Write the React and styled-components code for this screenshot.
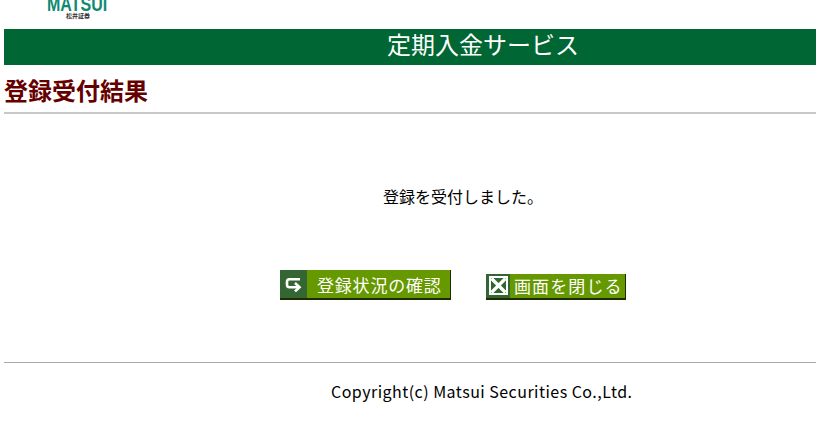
import React from "react";
import styled, { createGlobalStyle } from "styled-components";

const GlobalStyle = createGlobalStyle`
  html, body {
    margin: 0;
    padding: 0;
    background: #fff;
    overflow: hidden;
  }
  body {
    font-family: "Noto Sans CJK JP", "Liberation Sans", sans-serif;
  }
`;

const Page = styled.div`
  width: 816px;
  height: 421px;
  overflow: hidden;
  padding-left: 4px;
  box-sizing: border-box;
`;

const LogoRow = styled.div`
  height: 29px;
  padding-left: 43px;
  overflow: hidden;
`;

const Logo = styled.div`
  width: 62px;
  margin-top: -4px;
  text-align: center;
`;

const LogoName = styled.div`
  font-family: "Liberation Sans", sans-serif;
  font-weight: bold;
  font-size: 20px;
  line-height: 16px;
  color: #0f8a72;
  white-space: nowrap;
  transform: scaleX(0.8);
  transform-origin: left center;
  text-align: left;
`;

const LogoSub = styled.div`
  margin-top: 1px;
  font-size: 6px;
  line-height: 6px;
  font-weight: bold;
  color: #333;
`;

const Banner = styled.div`
  height: 36px;
  background: #006633;
  color: #fff;
  font-size: 24px;
  line-height: 30px;
  padding-left: 383px;
`;

const Heading = styled.h1`
  margin: 0;
  height: 47px;
  line-height: 49px;
  font-size: 24px;
  font-weight: bold;
  color: #660000;
  border-bottom: 2px solid #c8c8c8;
  box-sizing: content-box;
`;

const Message = styled.p`
  margin: 0;
  padding-top: 71px;
  padding-left: 379px;
  height: 23px;
  font-size: 16px;
  line-height: 23px;
  color: #000;
  white-space: nowrap;
`;

const Actions = styled.div`
  display: flex;
  align-items: center;
  gap: 35px;
  margin-top: 62px;
  padding-left: 276px;
  height: 30px;
`;

const ActionButton = styled.button`
  display: flex;
  align-items: center;
  padding: 0;
  width: ${(p) => p.$width}px;
  height: ${(p) => p.$height}px;
  margin-top: ${(p) => p.$offset}px;
  border: 0;
  border-right: 1px solid #1c2b00;
  border-bottom: 2px solid #1c2b00;
  background: #669900;
  color: #fff;
  font-family: inherit;
  font-size: 17px;
`;

const IconCell = styled.span`
  display: flex;
  align-items: center;
  justify-content: center;
  flex: none;
  align-self: stretch;
  width: ${(p) => p.$width}px;
  background: #336633;
`;

const ButtonLabel = styled.span`
  padding-left: ${(p) => p.$inset}px;
  letter-spacing: ${(p) => p.$spacing}px;
  white-space: nowrap;
`;

const Rule = styled.hr`
  margin: 62px 0 0;
  border: 0;
  height: 1px;
  background: #a8a8a8;
`;

const Copyright = styled.div`
  margin-top: 16px;
  padding-left: 327px;
  font-size: 16px;
  line-height: 24px;
  letter-spacing: 0.47px;
  color: #000;
  white-space: nowrap;
`;

const ReturnIcon = () => (
  <svg width="17" height="15" viewBox="0 0 17 15" fill="none" stroke="#fff" strokeWidth="2.6">
    <path d="M15 2.2H4.5A2.5 2.5 0 0 0 2 4.7v3A2.5 2.5 0 0 0 4.5 10.2H14" />
    <path d="M10 6 L14.5 10.2 L10 14.4" />
  </svg>
);

const CloseIcon = () => (
  <svg width="19" height="19" viewBox="0 0 19 19">
    <rect x="1" y="1" width="17" height="17" fill="#336633" stroke="#fff" strokeWidth="2" />
    <path d="M2.5 2.5 L16.5 16.5 M16.5 2.5 L2.5 16.5" stroke="#fff" strokeWidth="3.2" />
  </svg>
);

const App = () => {
  return (
    <Page>
      <GlobalStyle />
      <LogoRow>
        <Logo>
          <LogoName>MATSUI</LogoName>
          <LogoSub>松井証券</LogoSub>
        </Logo>
      </LogoRow>
      <Banner>定期入金サービス</Banner>
      <Heading>登録受付結果</Heading>
      <Message>登録を受付しました。</Message>
      <Actions>
        <ActionButton $width={171} $height={30} $offset={0}>
          <IconCell $width={27}>
            <ReturnIcon />
          </IconCell>
          <ButtonLabel $inset={10} $spacing={0.8}>登録状況の確認</ButtonLabel>
        </ActionButton>
        <ActionButton $width={140} $height={26} $offset={3}>
          <IconCell $width={24}>
            <CloseIcon />
          </IconCell>
          <ButtonLabel $inset={4} $spacing={1.1}>画面を閉じる</ButtonLabel>
        </ActionButton>
      </Actions>
      <Rule />
      <Copyright>Copyright(c) Matsui Securities Co.,Ltd.</Copyright>
    </Page>
  );
};

export default App;
